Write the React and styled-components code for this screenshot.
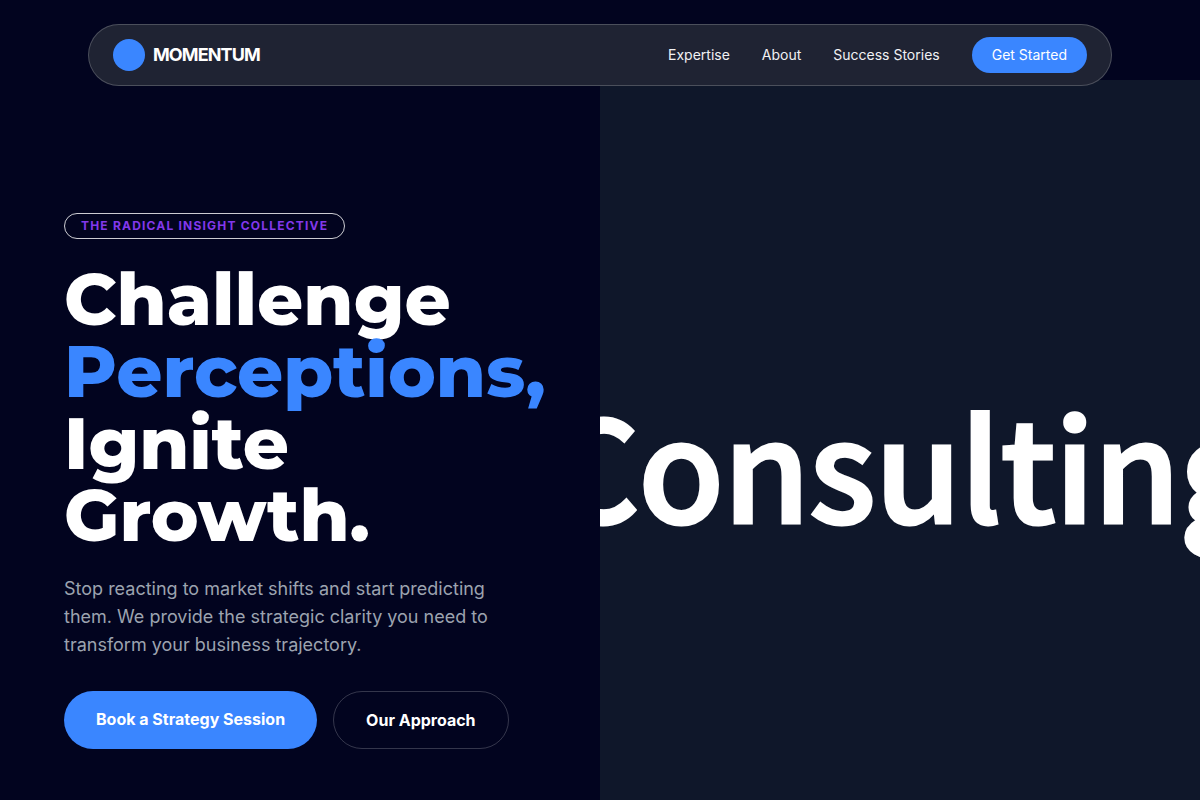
import React from "react";
import styled, { createGlobalStyle } from "styled-components";

const Global = createGlobalStyle`
  * { box-sizing: border-box; }
  html, body { margin: 0; padding: 0; background: #02041f; }
  body { font-family: Inter, "Liberation Sans", sans-serif; color: #fff; }
`;

const Page = styled.div`
  position: relative;
  width: 1200px;
  height: 800px;
  overflow: hidden;
  background: #02041f;
  padding-top: 80px;
`;

const Nav = styled.nav`
  position: absolute;
  top: 24px;
  left: 88px;
  width: 1024px;
  height: 62px;
  padding: 0 24px;
  display: flex;
  align-items: center;
  justify-content: space-between;
  border: 1px solid rgba(255, 255, 255, 0.2);
  border-radius: 31px;
  background: #1f2333;
  z-index: 2;
`;

const Brand = styled.div`
  display: flex;
  align-items: center;
  gap: 8px;
`;

const Dot = styled.div`
  width: 32px;
  height: 32px;
  border-radius: 50%;
  background: #3a86ff;
`;

const BrandName = styled.span`
  font-size: 18px;
  line-height: 28px;
  font-weight: 700;
  letter-spacing: -0.9px;
  color: #fff;
`;

const Links = styled.div`
  display: flex;
  align-items: center;
  gap: 32px;
`;

const NavLink = styled.a`
  font-size: 14px;
  line-height: 20px;
  font-weight: 400;
  color: #f1f1f3;
`;

const CTA = styled.a`
  display: block;
  padding: 8px 20px;
  border-radius: 18px;
  font-size: 14px;
  line-height: 20px;
  background: #3a86ff;
  color: #fff;
`;

const Split = styled.main`
  display: grid;
  grid-template-columns: 600px 600px;
  height: 720px;
`;

const Left = styled.section`
  padding: 133px 0 0 64px;
`;

const Badge = styled.div`
  display: inline-block;
  height: 26px;
  padding: 0 16px;
  border: 1px solid rgba(255, 255, 255, 0.8);
  border-radius: 13px;
  font-size: 12px;
  line-height: 24px;
  font-weight: 700;
  letter-spacing: 1.2px;
  color: #8338ec;
`;

const Title = styled.h1`
  margin: 24px 0 0;
  font-family: Montserrat, Inter, sans-serif;
  font-size: 72px;
  line-height: 72px;
  font-weight: 800;
  color: #fff;
`;

const Accent = styled.span`
  color: #3a86ff;
`;

const Lead = styled.p`
  margin: 24px 0 0;
  width: 448px;
  font-size: 18px;
  line-height: 28px;
  color: #9ca3af;
`;

const Actions = styled.div`
  margin-top: 32px;
  display: flex;
  gap: 16px;
`;

const Primary = styled.a`
  display: block;
  height: 58px;
  padding: 0 32px;
  border-radius: 29px;
  background: #3a86ff;
  color: #fff;
  font-size: 16px;
  line-height: 56px;
  font-weight: 700;
`;

const Secondary = styled.a`
  display: block;
  height: 58px;
  padding: 0 32px;
  border-radius: 29px;
  border: 1px solid rgba(255, 255, 255, 0.2);
  color: #fff;
  font-size: 16px;
  line-height: 56px;
  font-weight: 700;
`;

const Right = styled.section`
  background: #0f172a;
  overflow: hidden;
  padding: 44px 0 0 8px;
  display: flex;
  align-items: center;
  justify-content: center;
`;

const BigWord = styled.div`
  font-family: "Noto Sans CJK JP", "Noto Sans", sans-serif;
  font-size: 140px;
  line-height: 1;
  font-weight: 500;
  letter-spacing: -1.4px;
  -webkit-text-stroke: 3px #fff;
  color: #fff;
  white-space: nowrap;
`;

export default function App() {
  return (
    <>
      <Global />
      <Page>
        <Nav>
          <Brand>
            <Dot />
            <BrandName>MOMENTUM</BrandName>
          </Brand>
          <Links>
            <NavLink>Expertise</NavLink>
            <NavLink>About</NavLink>
            <NavLink>Success Stories</NavLink>
            <CTA>Get Started</CTA>
          </Links>
        </Nav>
        <Split>
          <Left>
            <Badge>THE RADICAL INSIGHT COLLECTIVE</Badge>
            <Title>
              Challenge
              <br />
              <Accent>Perceptions,</Accent>
              <br />
              Ignite
              <br />
              Growth.
            </Title>
            <Lead>
              Stop reacting to market shifts and start predicting them. We provide the strategic clarity you need to transform your business trajectory.
            </Lead>
            <Actions>
              <Primary>Book a Strategy Session</Primary>
              <Secondary>Our Approach</Secondary>
            </Actions>
          </Left>
          <Right>
            <BigWord>Consulting</BigWord>
          </Right>
        </Split>
      </Page>
    </>
  );
}
